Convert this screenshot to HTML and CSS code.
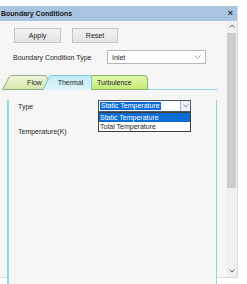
FILE: index.html
```html
<!DOCTYPE html>
<html>
<head>
<meta charset="utf-8">
<link rel="stylesheet" href="styles.css">
</head>
<body>
<div class="window">
  <div class="titlebar">
    <span class="title">Boundary Conditions</span>
    <span class="close">×</span>
  </div>
  <div class="main">
    <div class="content">
      <div class="btn-row">
        <button class="btn btn-apply">Apply</button>
        <button class="btn btn-reset">Reset</button>
      </div>
      <div class="field-row">
        <span class="label label-type">Boundary Condition Type</span>
        <div class="combo combo-type">
          <span class="combo-text">Inlet</span>
          <svg class="chev" width="7" height="4" viewBox="0 0 7 4"><path d="M0.5 0.5 L3.5 3.5 L6.5 0.5" fill="none" stroke="#9a9a9a" stroke-width="0.9"/></svg>
        </div>
      </div>
      <svg class="tabs" width="220" height="15" viewBox="0 0 220 15">
        <defs>
          <linearGradient id="gFlow" x1="0" y1="0" x2="0" y2="1">
            <stop offset="0" stop-color="#eef6da"/>
            <stop offset="1" stop-color="#d3e7a9"/>
          </linearGradient>
          <linearGradient id="gTurb" x1="0" y1="0" x2="0" y2="1">
            <stop offset="0" stop-color="#e2f8b2"/>
            <stop offset="1" stop-color="#c2ec74"/>
          </linearGradient>
          <linearGradient id="gTherm" x1="0" y1="0" x2="0" y2="1">
            <stop offset="0" stop-color="#bfeaf4"/>
            <stop offset="1" stop-color="#dff4f8"/>
          </linearGradient>
        </defs>
        <line x1="7" y1="14.5" x2="217" y2="14.5" stroke="#93d6e2" stroke-width="1"/>
        <path d="M2.5 14.5 L9.5 1.5 Q10 0.5 11.5 0.5 L46 0.5 L52 14.5 Z" fill="url(#gFlow)" stroke="#97ac8c" stroke-width="1"/>
        <path d="M91.5 14.5 L91.5 0.5 L144 0.5 Q147.5 0.5 147.5 4 L147.5 14.5 Z" fill="url(#gTurb)" stroke="#8db466" stroke-width="1"/>
        <path d="M43 15 L49.5 1.5 Q50 0.5 51.5 0.5 L88.5 0.5 Q91.5 0.5 91.5 3.5 L91.5 15 Z" fill="url(#gTherm)"/>
        <path d="M43 15 L49.5 1.5 Q50 0.5 51.5 0.5 L88.5 0.5 Q91.5 0.5 91.5 3.5 L91.5 15" fill="none" stroke="#74c8d8" stroke-width="1"/>
        <text x="34.5" y="10" class="tab-text" text-anchor="middle">Flow</text>
        <text x="70.5" y="10" class="tab-text" text-anchor="middle">Thermal</text>
        <text x="97" y="10" class="tab-text">Turbulence</text>
      </svg>
      <div class="panel">
        <div class="prow prow-type">
          <span class="plabel">Type</span>
          <div class="combo-wrap">
            <div class="combo combo-open">
              <span class="sel">Static Temperature</span>
              <span class="dd-btn">
                <svg width="6" height="4" viewBox="0 0 6 4"><path d="M0.5 0.5 L3 3 L5.5 0.5" fill="none" stroke="#7a8896" stroke-width="0.9"/></svg>
              </span>
            </div>
            <ul class="list">
              <li class="item item-hl">Static Temperature</li>
              <li class="item">Total Temperature</li>
            </ul>
          </div>
        </div>
        <div class="prow prow-temp">
          <span class="plabel">Temperature(K)</span>
        </div>
      </div>
    </div>
    <div class="scrollbar">
      <div class="sb-arrow sb-up">
        <svg width="6" height="4" viewBox="0 0 6 4"><path d="M0.5 3.5 L3 1 L5.5 3.5" fill="none" stroke="#606060" stroke-width="1"/></svg>
      </div>
      <div class="thumb"></div>
      <div class="sb-space"></div>
      <div class="sb-arrow sb-down">
        <svg width="6" height="4" viewBox="0 0 6 4"><path d="M0.5 0.5 L3 3 L5.5 0.5" fill="none" stroke="#606060" stroke-width="1"/></svg>
      </div>
    </div>
  </div>
</div>
</body>
</html>
```

FILE: styles.css
```css
* {
  box-sizing: border-box;
}

html, body {
  margin: 0;
  padding: 0;
  background: #ffffff;
}

body {
  width: 247px;
  height: 284px;
  overflow: hidden;
  font-family: "Liberation Sans", Arial, sans-serif;
  font-size: 7px;
  color: #1e1e1e;
}

.window {
  margin-top: 6px;
  width: 238px;
  height: 272px;
  background: #f6f6f6;
  border-right: 1px solid #dcdcdc;
  border-bottom: 1px solid #dcdcdc;
}

.titlebar {
  height: 15px;
  background: #a9c4e1;
  display: flex;
  align-items: center;
  justify-content: space-between;
  padding-left: 1px;
  padding-right: 4px;
}

.title {
  font-weight: bold;
  font-size: 7px;
  color: #1a1a1a;
}

.close {
  font-weight: bold;
  font-size: 9px;
  color: #333333;
  line-height: 1;
}

.main {
  display: flex;
  height: 256px;
}

.content {
  width: 226px;
  padding-top: 7px;
}

.btn-row {
  display: flex;
  gap: 11px;
  margin-left: 14px;
  height: 15px;
}

.btn {
  height: 15px;
  padding: 0;
  border: 1px solid #c4c4c4;
  background: linear-gradient(#f3f3f3, #e5e5e5);
  font-family: inherit;
  font-size: 7px;
  color: #222222;
}

.btn-apply {
  width: 47px;
}

.btn-reset {
  width: 46px;
}

.field-row {
  display: flex;
  align-items: center;
  margin-top: 7px;
  height: 14px;
  padding-left: 13px;
}

.label-type {
  width: 94px;
}

.combo {
  background: #ffffff;
  display: flex;
  align-items: center;
}

.combo-type {
  width: 99px;
  height: 14px;
  border: 1px solid #b8b8b8;
  padding-left: 4px;
  padding-right: 4px;
  justify-content: space-between;
}

.tabs {
  display: block;
  margin-top: 11px;
}

.tab-text {
  font-family: "Liberation Sans", Arial, sans-serif;
  font-size: 7px;
  fill: #1e1e1e;
}

.panel {
  margin-left: 7px;
  width: 210px;
  height: 187px;
  border: 1px solid #93d6e2;
  border-top: none;
  border-left: 2px solid #93d6e2;
  background: #f7f7f7;
  padding-left: 9px;
}

.prow {
  display: flex;
  align-items: center;
  height: 12px;
}

.prow-type {
  margin-top: 10px;
}

.prow-temp {
  margin-top: 13px;
}

.plabel {
  width: 80px;
}

.combo-wrap {
  position: relative;
}

.combo-open {
  width: 93px;
  height: 12px;
  border: 1px solid #4a5868;
  padding-left: 1px;
  justify-content: space-between;
}

.sel {
  background: #0a6cd4;
  color: #ffffff;
  line-height: 8px;
  padding: 0 1px;
}

.dd-btn {
  width: 10px;
  height: 10px;
  border-left: 1px solid #a8b4c0;
  background: #eef2f6;
  display: flex;
  align-items: center;
  justify-content: center;
}

.list {
  position: absolute;
  top: 12px;
  left: 0;
  width: 93px;
  margin: 0;
  padding: 0;
  list-style: none;
  background: #ffffff;
  border: 1px solid #3e3e3e;
}

.item {
  height: 9px;
  line-height: 9px;
  padding-left: 1px;
}

.item-hl {
  background: #0a6cd4;
  color: #ffffff;
}

.scrollbar {
  width: 11px;
  background: #f0f0f0;
  display: flex;
  flex-direction: column;
  align-items: center;
}

.sb-arrow {
  display: flex;
  align-items: center;
  justify-content: center;
  width: 11px;
}

.sb-up {
  height: 10px;
}

.thumb {
  margin-top: 2px;
  width: 9px;
  height: 155px;
  background: #cdcdcd;
}

.sb-space {
  flex: 1;
}

.sb-down {
  height: 12px;
}
```
